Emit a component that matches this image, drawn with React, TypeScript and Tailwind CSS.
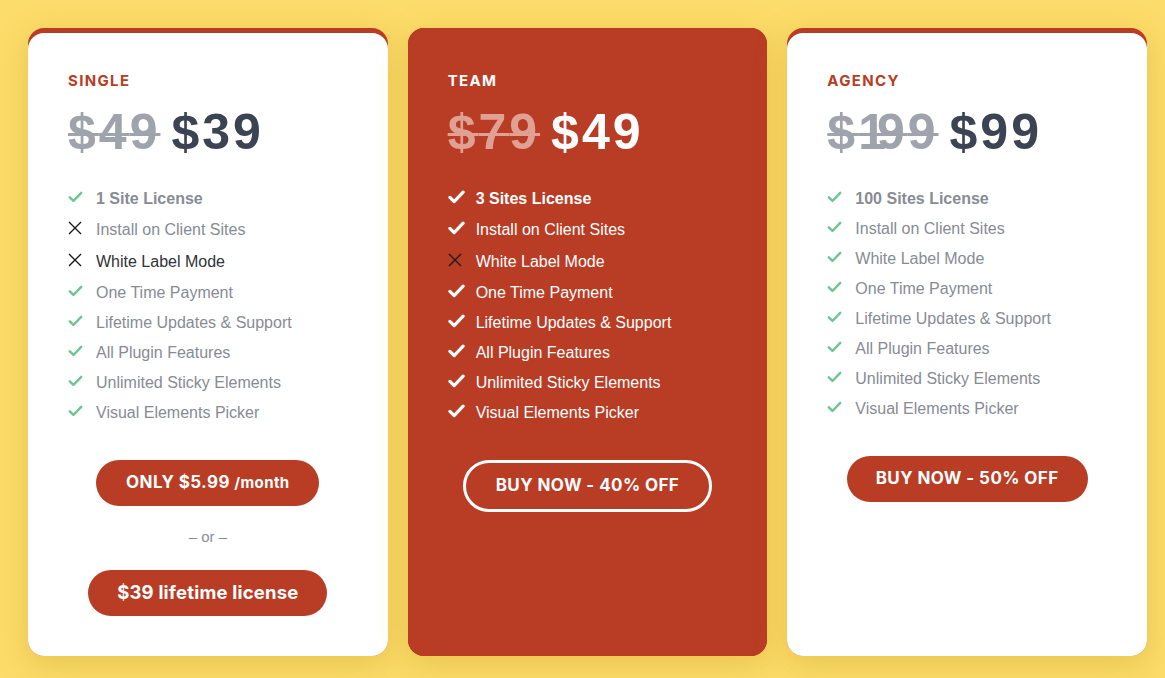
type Feature = { label: string; ok: boolean; bold?: boolean; dark?: boolean };

type Plan = {
  name: string;
  oldPrice: string;
  price: string;
  featured?: boolean;
  features: Feature[];
};

const shared = [
  "One Time Payment",
  "Lifetime Updates & Support",
  "All Plugin Features",
  "Unlimited Sticky Elements",
  "Visual Elements Picker",
];

const plans: Plan[] = [
  {
    name: "SINGLE",
    oldPrice: "$49",
    price: "$39",
    features: [
      { label: "1 Site License", ok: true, bold: true },
      { label: "Install on Client Sites", ok: false },
      { label: "White Label Mode", ok: false, dark: true },
      ...shared.map((label) => ({ label, ok: true })),
    ],
  },
  {
    name: "TEAM",
    oldPrice: "$79",
    price: "$49",
    featured: true,
    features: [
      { label: "3 Sites License", ok: true, bold: true },
      { label: "Install on Client Sites", ok: true },
      { label: "White Label Mode", ok: false },
      ...shared.map((label) => ({ label, ok: true })),
    ],
  },
  {
    name: "AGENCY",
    oldPrice: "$199",
    price: "$99",
    features: [
      { label: "100 Sites License", ok: true, bold: true },
      { label: "Install on Client Sites", ok: true },
      { label: "White Label Mode", ok: true },
      ...shared.map((label) => ({ label, ok: true })),
    ],
  },
];

const heading = { fontFamily: "Inter, 'Open Sans', sans-serif" };
const body = { fontFamily: "'Liberation Sans', Arial, sans-serif" };

// heavy check mark, like the theme's icon font
function CheckIcon({ className, big }: { className: string; big?: boolean }) {
  return (
    <svg
      viewBox="0 0 16 13"
      className={`${big ? "h-[14px] w-[17px]" : "h-[12px] w-[15px]"} ${className}`}
      fill="none"
      stroke="currentColor"
      strokeWidth={big ? 3 : 2.6}
      strokeLinecap="round"
      strokeLinejoin="round"
    >
      <path d="M1.8 6.8 5.8 10.8 14.2 2" />
    </svg>
  );
}

function CrossIcon() {
  return (
    <svg
      viewBox="0 0 14 14"
      className="h-[14px] w-[14px] text-[#1b1b1b]"
      fill="none"
      stroke="currentColor"
      strokeWidth={1.4}
    >
      <path d="M1 1 13 13M13 1 1 13" />
    </svg>
  );
}

// the price font has a narrow "1", pull the next digit in
function Price({ value }: { value: string }) {
  return (
    <>
      {value.split("").map((ch, i) =>
        ch === "1" ? (
          <span key={i} className="tracking-[-9px]">
            1
          </span>
        ) : (
          <span key={i}>{ch}</span>
        ),
      )}
    </>
  );
}

function FeatureRow({
  f,
  featured,
  tall,
}: {
  f: Feature;
  featured?: boolean;
  tall: boolean;
}) {
  const textColor = featured
    ? "text-white"
    : f.dark
      ? "text-[#2f3337]"
      : "text-[#878b94]";
  return (
    <li className={`flex items-center gap-[11px] ${tall ? "h-[32px]" : "h-[30px]"}`}>
      <span className="flex w-[17px] justify-start pb-[4px]">
        {f.ok ? (
          <CheckIcon
            big={featured}
            className={featured ? "text-white" : "text-[#6cc592]"}
          />
        ) : (
          <CrossIcon />
        )}
      </span>
      <span
        className={`text-[16px] ${textColor} ${f.bold ? "font-bold" : ""}`}
        style={body}
      >
        {f.label}
      </span>
    </li>
  );
}

function PlanCard({ plan }: { plan: Plan }) {
  const { featured } = plan;
  const hasCross = plan.features.some((f) => !f.ok);
  return (
    <div
      className={`flex h-[628px] w-[359.67px] flex-col rounded-[16px] bg-[#b93c25] shadow-[0_8px_30px_rgba(200,150,30,0.35)] ${featured ? "" : "pt-[5px]"}`}
    >
      <div
        className={`flex flex-1 flex-col rounded-[16px] px-[40px] ${featured ? "bg-[#b93c25] pt-[43px]" : "bg-white pt-[38px]"}`}
      >
        <div
          className={`text-[15px] font-bold leading-[20px] tracking-[0.09em] ${featured ? "text-white" : "text-[#b93c25]"}`}
          style={heading}
        >
          {plan.name}
        </div>
        <div
          className="mt-[11px] flex items-center gap-[11px] text-[50px] font-bold leading-[60px] tracking-[3px]"
          style={body}
        >
          <span
            className={`line-through decoration-[3px] ${featured ? "text-[#e0a093]" : "text-[#9fa3ab]"}`}
          >
            <Price value={plan.oldPrice} />
          </span>
          <span className={featured ? "text-white" : "text-[#3c4352]"}>
            {plan.price}
          </span>
        </div>
        <ul className="mt-[22px] flex flex-col">
          {plan.features.map((f, i) => (
            <FeatureRow
              key={f.label}
              f={f}
              featured={featured}
              tall={hasCross && (i === 1 || i === 2)}
            />
          ))}
        </ul>
        <div className="mt-[32px] flex flex-col items-center" style={heading}>
          {plan.name === "SINGLE" && (
            <>
              <button className="flex h-[46px] w-[223px] items-center justify-center rounded-full bg-[#b93c25] text-[17px] font-bold tracking-[0.4px] text-white">
                ONLY $5.99&nbsp;<span className="text-[15px]">/month</span>
              </button>
              <div
                className="mt-[21px] text-[15px] leading-[20px] text-[#8a8e95]"
                style={body}
              >
                – or –
              </div>
              <button className="mt-[23px] flex h-[46px] w-[239px] items-center justify-center rounded-full bg-[#b93c25] text-[18.5px] font-bold tracking-[0.2px] text-white">
                $39 lifetime license
              </button>
            </>
          )}
          {plan.name === "TEAM" && (
            <button className="flex h-[52px] w-[249px] items-center justify-center rounded-full border-[3px] border-white text-[17px] font-bold tracking-[0.4px] text-white">
              BUY NOW - 40% OFF
            </button>
          )}
          {plan.name === "AGENCY" && (
            <button className="flex h-[46px] w-[241px] items-center justify-center rounded-full bg-[#b93c25] text-[17px] font-bold tracking-[0.4px] text-white">
              BUY NOW - 50% OFF
            </button>
          )}
        </div>
      </div>
    </div>
  );
}

export default function App() {
  return (
    <div className="flex h-[678px] w-[1165px] items-start gap-[20px] bg-[#fcdc6a] pl-[28px] pt-[28px]">
      {plans.map((p) => (
        <PlanCard key={p.name} plan={p} />
      ))}
    </div>
  );
}
